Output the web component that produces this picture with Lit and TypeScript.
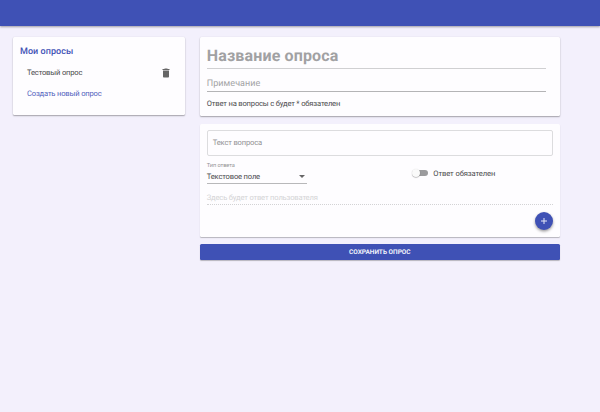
import { LitElement, html, css } from "lit";
import { customElement } from "lit/decorators.js";

@customElement("app-root")
class AppRoot extends LitElement {
  static styles = css`
    :host {
      display: block;
      height: 412px;
      overflow: hidden;
      background: #f3f0fc;
      font-family: Roboto, "Liberation Sans", sans-serif;
      font-size: 7.6px;
      letter-spacing: -0.18px;
      text-rendering: geometricPrecision;
      color: #4b4b4d;
    }
    * { box-sizing: border-box; }
    header {
      height: 26px;
      background: #3f51b5;
      box-shadow: 0 1px 2px rgba(0, 0, 0, 0.35);
    }
    .layout {
      display: grid;
      grid-template-columns: 172.4px 360px;
      column-gap: 14.4px;
      align-items: start;
      padding: 11px 0 0 13px;
    }
    .card {
      background: #fefdff;
      border-radius: 1.5px;
      box-shadow: 0 1px 1.5px rgba(0, 0, 0, 0.32), 0 0 2px rgba(0, 0, 0, 0.06);
    }
    .surveys { height: 78px; padding: 8px 7px 0; }
    .heading {
      height: 14px;
      line-height: 14px;
      font-size: 9px;
      font-weight: 500;
      letter-spacing: 0.05px;
      color: #3f51b5;
    }
    .item {
      display: flex;
      align-items: center;
      justify-content: space-between;
      height: 21px;
      padding: 0 6px 0 7px;
      line-height: 21px;
    }
    .item:nth-child(2) { margin-top: 3px; }
    .create { color: #5261bd; }
    .trash { display: block; width: 12px; height: 12px; fill: #666; }
    .main { display: flex; flex-direction: column; }
    .intro { height: 79px; padding: 6px 14px 0 7px; }
    .title {
      height: 26px;
      line-height: 26px;
      border-bottom: 1px solid #d0d0d2;
      font-size: 16px;
      font-weight: 700;
      letter-spacing: 0.15px;
      color: #a1a1a3;
    }
    .note {
      height: 23px;
      padding-top: 4px;
      line-height: 23px;
      border-bottom: 1px solid #b4b4b6;
      font-size: 9px;
      letter-spacing: 0.05px;
      color: #a3a3a5;
    }
    .hint { margin-top: 5px; line-height: 14px; }
    .question {
      height: 113px;
      margin-top: 8px;
      padding: 6px 7px 0;
      box-shadow: 0 1px 1px rgba(0, 0, 0, 0.25);
    }
    .outlined {
      height: 26px;
      padding-left: 5px;
      line-height: 24px;
      border: 1px solid #dcdcde;
      border-radius: 2px;
      color: #929294;
    }
    .options { display: flex; height: 28px; margin-top: 4px; }
    .select { width: 100px; height: 24px; border-bottom: 1px solid #b8b8ba; }
    .label {
      height: 10px;
      padding-top: 1px;
      line-height: 10px;
      font-size: 5.7px;
      letter-spacing: -0.1px;
      color: #959597;
    }
    .value {
      display: flex;
      align-items: center;
      justify-content: space-between;
      height: 13px;
      padding-right: 2px;
    }
    .arrow {
      border: 3px solid transparent;
      border-top-color: #666;
      border-bottom: 0;
    }
    .toggle {
      display: flex;
      align-items: center;
      height: 18px;
      margin: 4px 0 0 105px;
      letter-spacing: -0.1px;
    }
    .track {
      position: relative;
      width: 16px;
      height: 6px;
      margin-right: 5.5px;
      border-radius: 3px;
      background: linear-gradient(90deg, transparent 3px, #9b9b9d 3px);
    }
    .thumb {
      position: absolute;
      left: 0;
      top: -1px;
      width: 8px;
      height: 8px;
      border-radius: 50%;
      background: #fafafa;
      box-shadow: 0 0.5px 1px rgba(0, 0, 0, 0.4);
    }
    .answer {
      height: 17px;
      line-height: 20px;
      border-bottom: 1px dotted #d3d3d5;
      color: #d4d4d6;
    }
    .actions { display: flex; justify-content: flex-end; padding-top: 7px; }
    .add {
      display: grid;
      place-items: center;
      width: 18px;
      height: 18px;
      padding: 0;
      border: 0;
      border-radius: 50%;
      background: #3f51b5;
      box-shadow: 0 1.5px 3px rgba(0, 0, 0, 0.4);
    }
    .add svg { width: 8px; height: 8px; stroke: #e5e7f6; }
    .save {
      height: 16px;
      margin-top: 7px;
      padding: 0;
      border: 0;
      border-radius: 1.5px;
      background: #3f51b5;
      box-shadow: 0 1px 1px rgba(0, 0, 0, 0.25);
      color: #f0f1fa;
      font-family: inherit;
      font-size: 6.5px;
      font-weight: 700;
      letter-spacing: 0;
      line-height: 15px;
      text-rendering: inherit;
    }
  `;

  render() {
    return html`
      <header></header>
      <div class="layout">
        <nav class="card surveys">
          <div class="heading">Мои опросы</div>
          <div class="item">
            <span>Тестовый опрос</span>
            <svg class="trash" viewBox="0 0 24 24">
              <path d="M6 19c0 1.1.9 2 2 2h8c1.1 0 2-.9 2-2V7H6v12zM19 4h-3.5l-1-1h-5l-1 1H5v2h14V4z" />
            </svg>
          </div>
          <div class="item create"><span>Создать новый опрос</span></div>
        </nav>
        <div class="main">
          <section class="card intro">
            <div class="title">Название опроса</div>
            <div class="note">Примечание</div>
            <div class="hint">Ответ на вопросы с будет * обязателен</div>
          </section>
          <section class="card question">
            <div class="outlined">Текст вопроса</div>
            <div class="options">
              <div class="select">
                <div class="label">Тип ответа</div>
                <div class="value"><span>Текстовое поле</span><span class="arrow"></span></div>
              </div>
              <div class="toggle">
                <span class="track"><span class="thumb"></span></span>
                <span>Ответ обязателен</span>
              </div>
            </div>
            <div class="answer">Здесь будет ответ пользователя</div>
            <div class="actions">
              <button class="add">
                <svg viewBox="0 0 8 8"><path d="M4 1v6M1 4h6" /></svg>
              </button>
            </div>
          </section>
          <button class="save">СОХРАНИТЬ ОПРОС</button>
        </div>
      </div>
    `;
  }
}
